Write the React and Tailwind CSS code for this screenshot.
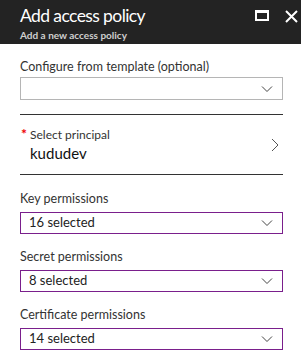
import React from "react";

function ChevronDown() {
    return (
        <svg width="12" height="8" viewBox="0 0 12 8" className="shrink-0">
            <path d="M1 1.5 L6 6.5 L11 1.5" fill="none" stroke="#444" strokeWidth="1" />
        </svg>
    );
}

function ChevronRight() {
    return (
        <svg width="8" height="14" viewBox="0 0 8 14" className="shrink-0">
            <path d="M1 1 L7 7 L1 13" fill="none" stroke="#555" strokeWidth="1" />
        </svg>
    );
}

function PermissionField({ label, value }) {
    return (
        <div className="flex flex-col">
            <div className="text-[12.5px] leading-[16px] text-[#333]">{label}</div>
            <div className="mt-[5px] h-[22px] border border-[#7a1f8c] flex items-center justify-between pl-[8px] pr-[9px]">
                <span className="text-[13px] text-[#222]">{value}</span>
                <ChevronDown />
            </div>
        </div>
    );
}

export default function App() {
    return (
        <div
            className="w-[301px] h-[360px] bg-white overflow-hidden"
            style={{ fontFamily: 'Lato, "Open Sans", sans-serif' }}
        >
            <div className="h-[44px] bg-[#232323] flex justify-between pl-[20px] pr-[3px]">
                <div className="flex flex-col pt-[4px]">
                    <div className="text-[17.5px] leading-[24px] text-white tracking-[-0.6px]">
                        Add access policy
                    </div>
                    <div className="text-[10px] leading-[12px] font-bold text-[#cfcfcf] mt-[1px]">
                        Add a new access policy
                    </div>
                </div>
                <div className="flex items-start gap-[16px] pt-[10px]">
                    <div className="w-[14px] h-[11px] border-2 border-t-[3px] border-white"></div>
                    <svg width="13" height="13" viewBox="0 0 13 13">
                        <path d="M1 1 L12 12 M12 1 L1 12" stroke="white" strokeWidth="2" />
                    </svg>
                </div>
            </div>

            <div className="pl-[20px] pr-[18px] flex flex-col">
                <div className="pt-[15px] text-[12.5px] leading-[16px] text-[#333]">
                    Configure from template (optional)
                </div>
                <div className="mt-[2px] h-[23px] border border-[#b5b5b5] flex items-center justify-end pr-[9px]">
                    <ChevronDown />
                </div>

                <div className="mt-[14px] border-t border-[#333]"></div>
                <div className="h-[59px] flex items-center justify-between pr-[4px]">
                    <div className="flex flex-col">
                        <div className="flex items-start">
                            <span className="text-[14px] leading-[14px] font-bold text-[#e00] w-[10px] pl-[1px]">*</span>
                            <span className="text-[12px] leading-[16px] text-[#333]">Select principal</span>
                        </div>
                        <div className="pl-[10px] text-[15px] leading-[20px] text-[#111]">kududev</div>
                    </div>
                    <ChevronRight />
                </div>
                <div className="border-t border-[#333]"></div>

                <div className="mt-[16px] flex flex-col gap-[15px]">
                    <PermissionField label="Key permissions" value="16 selected" />
                    <PermissionField label="Secret permissions" value="8 selected" />
                    <PermissionField label="Certificate permissions" value="14 selected" />
                </div>
            </div>
        </div>
    );
}
